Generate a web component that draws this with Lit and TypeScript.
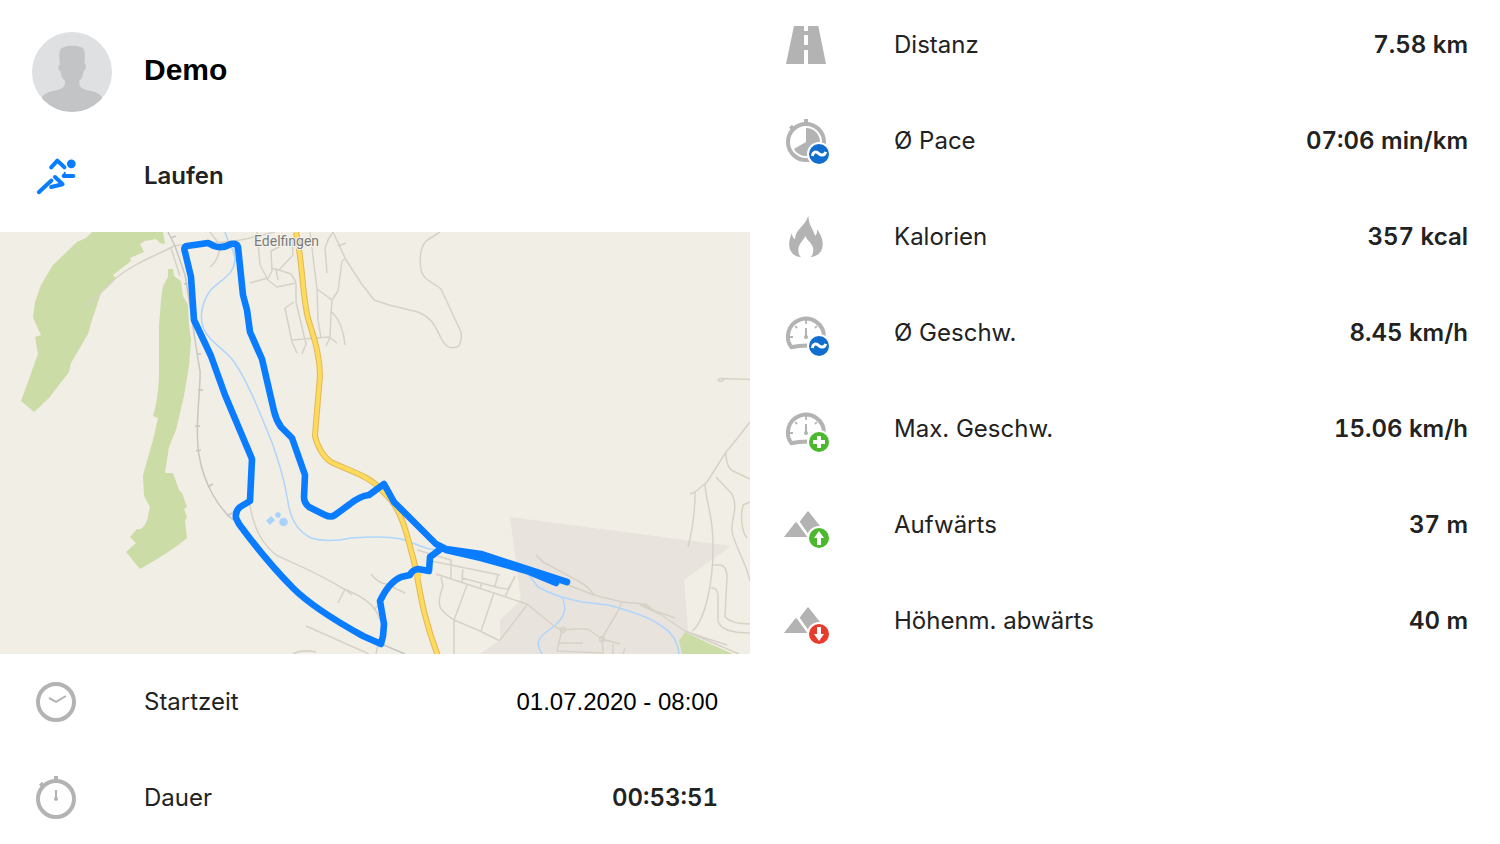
import { LitElement, html, svg, css, type TemplateResult } from "lit";
import { customElement, property } from "lit/decorators.js";

const waveBadge = svg`
  <circle cx="37" cy="37" r="12" fill="#fff"/>
  <circle cx="37" cy="37" r="10" fill="#116dce"/>
  <path d="M30.4 39C31 34.600 34 34 36.800 36.600C39.600 39 42.600 38.600 43.600 34.800" fill="none" stroke="#fff" stroke-width="3"/>`;

const plusBadge = svg`
  <circle cx="37" cy="37" r="12" fill="#fff"/>
  <circle cx="37" cy="37" r="10" fill="#4cb82e"/>
  <path d="M37 31V43M31 37H43" stroke="#fff" stroke-width="4"/>`;

const upBadge = svg`
  <circle cx="37" cy="37" r="12" fill="#fff"/>
  <circle cx="37" cy="37" r="10" fill="#4cb82e"/>
  <path d="M37 30L42 37H39V44H35V37H32Z" fill="#fff"/>`;

const downBadge = svg`
  <circle cx="37" cy="37" r="12" fill="#fff"/>
  <circle cx="37" cy="37" r="10" fill="#e83b2e"/>
  <path d="M37 44L42 37H39V30H35V37H32Z" fill="#fff"/>`;

const gauge = svg`
  <path d="M10 39A18 18 0 1 1 41.900 28.200" fill="none" stroke="#b3b3b3" stroke-width="4"/>
  <path d="M8.600 38.200C13 37.200 19 36.400 26 36.400" fill="none" stroke="#b3b3b3" stroke-width="4"/>
  <path d="M24 11V15M7 28H11M13.200 17.200L15 19M34.800 17.200L33 19" stroke="#b3b3b3" stroke-width="1.800"/>
  <path d="M24 19V28" stroke="#b3b3b3" stroke-width="2"/>
  <circle cx="24" cy="28" r="2" fill="#b3b3b3"/>`;

const mountains = svg`
  <path d="M2 36L13 21.800Q14 20.600 15 21.800L25.400 36Z" fill="#b3b3b3"/>
  <path d="M17.600 20.800L25 10.900Q26 9.700 27 10.900L38 25L28.500 36Z" fill="#b3b3b3"/>`;

const watchCase = svg`
  <circle cx="24" cy="25" r="18" fill="none" stroke="#b3b3b3" stroke-width="4"/>
  <path d="M22 2H26V6H22Z" fill="#b3b3b3"/>
  <path d="M8 11.600L11 9M9 9.500L12 12.500" stroke="#b3b3b3" stroke-width="3"/>`;

const icons: Record<string, TemplateResult> = {
  runner: svg`
    <circle cx="39.300" cy="11.800" r="4.400" fill="#0a7cff"/>
    <g fill="none" stroke="#0a7cff" stroke-width="4" stroke-linecap="round" stroke-linejoin="round">
      <path d="M19.200 15.400L25.300 8.600L32.400 15.300"/>
      <path d="M31.600 24H41.400"/>
      <path d="M30.500 24L32.800 20.200L33.600 24Z" stroke-width="1.200" fill="#0a7cff"/>
      <path d="M6.800 40.200L19.400 28.500"/>
      <path d="M23 25L30.600 32.200L19.200 35"/>
    </g>`,
  clock: svg`
    <circle cx="24" cy="24" r="18" fill="none" stroke="#b3b3b3" stroke-width="4"/>
    <path d="M17 20L24 23.800L34 18" fill="none" stroke="#b3b3b3" stroke-width="2"/>`,
  stopwatch: svg`
    ${watchCase}
    <path d="M24 16V25" stroke="#b3b3b3" stroke-width="2"/>
    <circle cx="24" cy="25" r="2" fill="#b3b3b3"/>`,
  road: svg`
    <path d="M12 5H36.300L44 43H4Z" fill="#b3b3b3"/>
    <path d="M24 5V10M24 14V24M24 29V43" stroke="#fff" stroke-width="4"/>`,
  pace: svg`
    ${watchCase}
    <path d="M24 25V11A14 14 0 1 1 11.900 32Z" fill="#b3b3b3"/>
    ${waveBadge}`,
  flame: svg`
    <path d="M26.300 2.600C26.600 12 31 16 33.200 23C35 21 35.300 19 35.200 16.200C38 20.500 41 25.500 40.700 32C40.300 38.500 36.500 43.300 28.500 44C30.500 42.500 31.300 40 31.300 36.500C31.200 30.500 24.500 27.500 23.200 22.800C22 27.500 16.500 30.500 16.300 36.500C16.300 40 17.200 42.500 19 44.200C11.500 43.500 7.500 38.500 7.200 32C7 27.500 8.400 24 9.600 20.200C10.200 23 11.200 24.800 13 26.500C13.300 15.500 23.500 13.500 26.300 2.600Z" fill="#b3b3b3"/>`,
  speed: svg`${gauge}${waveBadge}`,
  maxSpeed: svg`${gauge}${plusBadge}`,
  ascent: svg`${mountains}${upBadge}`,
  descent: svg`${mountains}${downBadge}`,
};

interface Stat {
  icon: string;
  label: string;
  value: string;
  plain?: boolean;
}

const timing: Stat[] = [
  { icon: "clock", label: "Startzeit", value: "01.07.2020 - 08:00", plain: true },
  { icon: "stopwatch", label: "Dauer", value: "00:53:51" },
];

const metrics: Stat[] = [
  { icon: "road", label: "Distanz", value: "7.58 km" },
  { icon: "pace", label: "Ø Pace", value: "07:06 min/km" },
  { icon: "flame", label: "Kalorien", value: "357 kcal" },
  { icon: "speed", label: "Ø Geschw.", value: "8.45 km/h" },
  { icon: "maxSpeed", label: "Max. Geschw.", value: "15.06 km/h" },
  { icon: "ascent", label: "Aufwärts", value: "37 m" },
  { icon: "descent", label: "Höhenm. abwärts", value: "40 m" },
];

@customElement("activity-icon")
export class ActivityIcon extends LitElement {
  @property() name = "";

  static styles = css`
    :host { display: block; width: 80px; flex: none; }
    .glyph { display: block; width: 48px; height: 48px; }
  `;

  render() {
    return html`<svg class="glyph" viewBox="0 0 48 48" aria-hidden="true">${icons[this.name]}</svg>`;
  }
}

@customElement("stat-list")
export class StatList extends LitElement {
  @property({ attribute: false }) stats: Stat[] = [];

  static styles = css`
    :host { display: block; }
    .list { display: flex; flex-direction: column; gap: 48px; margin: 0; padding: 0 32px; }
    .row { display: flex; align-items: center; gap: 32px; line-height: 48px; }
    .label { flex: 1; }
    .value { margin: 0; font-weight: 600; font-variant-numeric: tabular-nums; white-space: nowrap; }
    .plain { font-family: "Liberation Sans", Arial, sans-serif; font-weight: 400; color: #000; }
  `;

  render() {
    return html`<dl class="list">
      ${this.stats.map(
        (s) => html`<div class="row">
          <activity-icon name=${s.icon}></activity-icon>
          <dt class="label">${s.label}</dt>
          <dd class="value ${s.plain ? "plain" : ""}">${s.value}</dd>
        </div>`
      )}
    </dl>`;
  }
}

@customElement("route-map")
export class RouteMap extends LitElement {
  static styles = css`
    :host { display: block; }
    .map { display: block; width: 100%; height: auto; background: #f1eee6; }
    .wood { fill: #ccdca6; }
    .urban { fill: #e8e4dd; }
    .street { fill: none; stroke: #d7d2c7; stroke-width: 1.5; stroke-linejoin: round; }
    .rail { fill: none; stroke: #c8c6c2; stroke-width: 1.5; }
    .river { fill: none; stroke: #afd5fb; stroke-width: 1.5; stroke-linejoin: round; }
    .pond { fill: #a9d3fc; }
    .casing { fill: none; stroke: #e0b85a; stroke-width: 6; stroke-linejoin: round; }
    .highway { fill: none; stroke: #fedb5c; stroke-width: 4; stroke-linejoin: round; }
    .track { fill: none; stroke: #0a7cff; stroke-width: 6.6; stroke-linejoin: round; stroke-linecap: round; }
    .place { font: 400 14px Roboto, sans-serif; fill: #7c7c7a; stroke: #f5f3ed; stroke-width: 2; paint-order: stroke; }
  `;

  render() {
    return html`<svg class="map" viewBox="0 232 750 422" role="img" aria-label="Edelfingen">
      <path class="urban" d="M510 517L731 546L684 580L688 630L683 654H500V620L521 600Z"/>
      <path class="urban" d="M480 654L500 640L521 598L560 610V654Z"/>
      <path class="wood" d="M92 232L86 238L77 242L53 265L41 285L35 302L33 317L35 322L41 335L35 337L38 354L21 401L34 412L49 398L69 372L71 363L88 334L92 320L96 308L101 293L116 278L113 275L131 261L130 258L144 252L140 244L145 241L156 239L160 243L165 244L163 232Z"/>
      <path class="wood" d="M168 269H173L174 276L181 281L183 296L188 305L189 325L191 340L189 366L184 396L176 430L169 447L165 473H173L179 490L182 493L187 507L184 509L187 517L185 521L187 538Q172 551 140 569L126 552L136 543L130 537L137 529L141 529Q147 524 148 516L150 507L144 496L143 475L153 440L158 418L153 416Q158 400 159 377V325L161 300L163 286L168 277Z"/>
      <path class="wood" d="M685 632L679 641L682 654H733L708 643Z"/>

      <path class="river" d="M225 232C228 244 233 246 235 258C235 276 219 280 210 291C203 301 199 315 203 327C208 342 231 353 236 365C250 385 263 421 271 440C278 460 284 477 288 502C291 523 301 533 311 538C324 542 337 541 351 538C377 536 392 537 401 539C414 543 421 547 430 549C460 551 504 558 529 575L538 587C549 593 557 596 569 599L582 602L608 605C631 611 649 617 660 625C672 632 678 643 679 654"/>
      <path class="river" d="M562 597C569 611 562 621 549 630C538 638 535 642 542 654M234 240L235 262"/>
      <path class="pond" d="M271 516L275 520L270 525L266 521Z"/>
      <circle class="pond" cx="278" cy="515" r="2.800"/>
      <circle class="pond" cx="283.500" cy="522" r="4.300"/>

      <path class="street" d="M87 306Q104 290 116 278C133 264 151 258 174 246C195 242 230 244 250 238L275 232M210 232L220 245Q219 260 210 267M171 248L180 276"/>
      <path class="street" d="M257 232L260 265L268 280L277 287L296 283M250 283L268 278L272 271L271 251L292 240L293 255L279 270L271 268M296 282L291 274L276 269L278 280M296 283V302L306 344L302 354M294 302L285 308L292 342L297 353M292 340L329 337L337 343M333 232L328 240L325 248L327 273M310 232L317 289L318 320L321 338M333 232L346 260L361 283L374 300L389 305L418 312C432 318 435 326 440 336C445 347 450 350 459 346Q462 340 461 332L441 289C432 281 424 281 421 270C419 256 421 243 429 239L440 232M338 246L346 243M345 259L342 261L338 291L332 300L317 289M332 300L331 314L330 338L326 346M332 312Q343 323 345 345"/>
      <path class="street" d="M250 505C253 528 264 547 278 556C293 563 318 573 342 588C357 594 376 603 380 620M338 603L345 589L352 595M371 574Q378 583 386 584L405 593M306 626L369 654M293 654Q302 649 316 652M374 610L382 601M376 654L378 644"/>
      <path class="street" d="M417 550L451 560V579M431 561L500 575M436 574L500 595L527 604L554 626L562 630L575 629L588 629L602 639L620 644M441 577L443 586C436 605 438 610 454 620L480 631L500 641M467 585L454 620V654M494 593L481 631M463 567L462 582M462 578L500 588M498 575L495 586M482 582L480 589M515 576L505 597M500 588L508 589L515 577M536 555L543 562L571 577Q588 585 594 595M500 640L527 605M562 630L557 651L603 653L602 639M558 643H583M602 638L617 613L622 602M613 644V654M625 648L623 654"/>
      <path class="street" d="M560 582L594 595L622 602L643 604L660 614L685 631L739 654M645 603L653 610L675 618M640 605L660 614M690 494L695 492L707 482L726 452L736 440L750 422M695 492C695 512 692 532 688 547M705 484C706 505 714 515 713 550C713 578 706 621 692 631M726 452Q726 468 733 471L750 479M716 477L732 494C739 509 731 516 732 531C734 545 746 562 750 581M750 502L743 505C740 518 742 532 747 538M713 565H721Q727 567 727 577L725 617Q732 624 750 624M711 588Q717 587 718 595V621Q721 633 750 633M685 631L705 638L727 645M750 379.500L724 378.500Q718 378 718 380Q721 383 724 379"/>
      <circle class="street" cx="563" cy="630" r="2.500"/>
      <circle class="street" cx="602" cy="639" r="2.500"/>
      <path class="rail" d="M168 232L175 246L185 275C190 304 195 342 200 371C201 392 194 426 199 455C204 485 219 508 233 520M379 643L405 654M171 238L176 236M184 284L190 283M197 354H201M198 390H203M195 426H200M196 451L201 450M208 487L213 484M227 516L232 513"/>
      <path class="casing" d="M296 232C303 264 302 294 308 318C312 333 320 352 320 376C318 400 316 421 315 436C318 449 326 460 333 463C353 472 372 477 384 493C400 506 406 530 412 554C419 576 419 607 438 656"/>
      <path class="highway" d="M296 232C303 264 302 294 308 318C312 333 320 352 320 376C318 400 316 421 315 436C318 449 326 460 333 463C353 472 372 477 384 493C400 506 406 530 412 554C419 576 419 607 438 656"/>
      <circle class="highway" cx="418" cy="575" r="1.500"/>

      <text class="place" x="254" y="246">Edelfingen</text>
      <path class="track" d="M567 582L481 554L446 549L436 544L394 502L384 484L369 495Q360 496 350 504L335 515Q331 518 325 515L309 507Q304 503 304 497L305 475L292 438L281 427Q276 420 274 411L262 359L250 332L247 310L243 295L238 247Q237 243 231 244Q222 249 214 246L208 243L187 246Q183 247 185 252L191 277L194 320L211 356L225 395L252 459L250 501L240 507Q235 511 236 518L239 524Q267 562 293 588C310 605 334 620 363 636L381 644L383 636L384 624L380 601Q389 582 401 577L410 575Q412 570 418 569L429 571L430 557L442 548"/>
      <path class="track" d="M446 550L481 558L527 571L556 583"/>
    </svg>`;
  }
}

@customElement("app-root")
export class AppRoot extends LitElement {
  static styles = css`
    :host {
      display: block;
      background: #fff;
      color: #222;
      font-family: Inter, "Noto Sans", sans-serif;
      font-size: 24px;
    }
    .page { display: grid; grid-template-columns: 1fr 1fr; align-items: start; }
    .head { display: flex; flex-direction: column; gap: 40px; padding: 32px; }
    .line { display: flex; align-items: center; gap: 32px; }
    .avatar { display: block; width: 80px; height: 80px; border-radius: 50%; }
    .name { margin: 0; font: 700 30px/76px "Liberation Sans", Arial, sans-serif; color: #000; align-self: flex-start; }
    .sport { margin: 0; font-size: 24px; font-weight: 600; line-height: 48px; }
    .timing { padding: 24px 0; }
    .metrics { padding: 21px 0; }
  `;

  render() {
    return html`<main class="page">
      <section>
        <header class="head">
          <div class="line">
            <svg class="avatar" viewBox="0 0 80 80" aria-hidden="true">
              <path d="M0 0H80V80H0Z" fill="#dfe0e2"/>
              <path d="M28 33C27 24 26.500 17 31 15.500C36 13 45 13.500 50 15.500C53.500 17 53 25 52.500 31.500C55 32 54 38 51.500 39.500C51 44 49.500 47 47.300 49C47 53 48 56 53 57.500C61 59.500 67 60.500 70 65L70 80H10V65C13 60.500 19 59.500 27 57.500C32 56 33.500 53 33 49C30.500 47 29 44 28.500 39.500C26 38 25.500 32.500 28 33Z" fill="#c3c4c6"/>
            </svg>
            <h1 class="name">Demo</h1>
          </div>
          <div class="line">
            <activity-icon name="runner"></activity-icon>
            <h2 class="sport">Laufen</h2>
          </div>
        </header>
        <route-map></route-map>
        <stat-list class="timing" .stats=${timing}></stat-list>
      </section>
      <section>
        <stat-list class="metrics" .stats=${metrics}></stat-list>
      </section>
    </main>`;
  }
}
